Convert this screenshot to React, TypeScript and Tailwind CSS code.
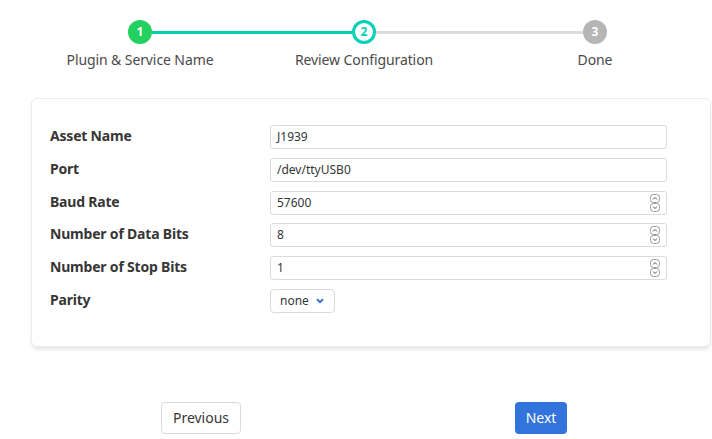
import React from "react";

type Step = { num: number; label: string; state: "done" | "active" | "todo" };

const steps: Step[] = [
  { num: 1, label: "Plugin & Service Name", state: "done" },
  { num: 2, label: "Review Configuration", state: "active" },
  { num: 3, label: "Done", state: "todo" },
];

type Field = { label: string; value: string; kind: "text" | "number" | "select" };

const fields: Field[] = [
  { label: "Asset Name", value: "J1939", kind: "text" },
  { label: "Port", value: "/dev/ttyUSB0", kind: "text" },
  { label: "Baud Rate", value: "57600", kind: "number" },
  { label: "Number of Data Bits", value: "8", kind: "number" },
  { label: "Number of Stop Bits", value: "1", kind: "number" },
  { label: "Parity", value: "none", kind: "select" },
];

function Spinner() {
  return (
    <svg width="10" height="18" viewBox="0 0 10 18" className="shrink-0">
      <rect x="0.5" y="0.5" width="9" height="8" rx="3" fill="none" stroke="#9a9a9a" />
      <path d="M3 5.5 L5 3.5 L7 5.5" fill="none" stroke="#555" strokeWidth="1" />
      <rect x="0.5" y="9.5" width="9" height="8" rx="3" fill="none" stroke="#9a9a9a" />
      <path d="M3 12.5 L5 14.5 L7 12.5" fill="none" stroke="#555" strokeWidth="1" />
    </svg>
  );
}

function StepItem({ step, left, right }: { step: Step; left: string; right: string }) {
  const circle =
    step.state === "done"
      ? "bg-[#23d160] text-white"
      : step.state === "active"
      ? "bg-white border-[3px] border-[#00d1b2] text-[#00d1b2]"
      : "bg-[#b5b5b5] text-white";
  return (
    <div className="flex flex-col items-center">
      <div className="flex items-center w-full h-6">
        <div className={`flex-1 h-[3px] ${left}`} />
        <div className={`w-6 h-6 rounded-full flex items-center justify-center text-[12px] font-bold ${circle}`}>
          {step.num}
        </div>
        <div className={`flex-1 h-[3px] ${right}`} />
      </div>
      <div className="mt-[7px] text-[14px] text-[#4a4a4a] leading-[18px] tracking-[-0.1px]">{step.label}</div>
    </div>
  );
}

export default function App() {
  return (
    <div className="w-[712px] h-[439px] bg-white overflow-hidden" style={{ fontFamily: '"Noto Sans", sans-serif' }}>
      {/* stepper */}
      <div className="grid grid-cols-[224px_224px_238px] pl-[28px] pt-[20px]">
        <StepItem step={steps[0]} left="bg-transparent" right="bg-[#00d1b2]" />
        <StepItem step={steps[1]} left="bg-[#00d1b2]" right="bg-[#dbdbdb]" />
        <StepItem step={steps[2]} left="bg-[#dbdbdb]" right="bg-transparent" />
      </div>

      {/* form card */}
      <div className="ml-[31px] mt-[29px] w-[680px] rounded-md border border-[#ececec] bg-white shadow-[0_3px_4px_-1px_rgba(10,10,10,0.12)] pl-[18px] pr-[43px] pt-[26px] pb-[33px]">
        <div className="flex flex-col gap-[8.8px]">
          {fields.map((f) => (
            <div key={f.label} className="flex items-start">
              <div className="w-[220px] mt-[2px] text-[14px] font-bold text-[#363636] leading-[18px] tracking-[-0.2px]">{f.label}</div>
              {f.kind === "select" ? (
                <div className="h-[24px] w-[65px] rounded-[4px] border border-[#dbdbdb] flex items-center pl-[9px] pr-[10px] text-[12px] text-[#363636]">
                  <span>{f.value}</span>
                  <svg width="8" height="6" viewBox="0 0 8 6" className="ml-auto">
                    <path d="M1 1.2 L4 4.2 L7 1.2" fill="none" stroke="#3273dc" strokeWidth="2" />
                  </svg>
                </div>
              ) : (
                <div className="h-[24px] flex-1 rounded-[3px] border border-[#dbdbdb] flex items-center pl-[6px] pr-[6px] text-[12px] text-[#363636]">
                  <span className="flex-1">{f.value}</span>
                  {f.kind === "number" && <Spinner />}
                </div>
              )}
            </div>
          ))}
        </div>
      </div>

      {/* buttons */}
      <div className="ml-[31px] w-[680px] mt-[55px] grid grid-cols-2">
        <div className="flex justify-center">
          <button className="h-[32px] px-[11px] rounded-[4px] border border-[#dbdbdb] bg-white text-[14px] text-[#363636]">
            Previous
          </button>
        </div>
        <div className="flex justify-center">
          <button className="h-[32px] px-[11px] rounded-[4px] bg-[#3273dc] text-[14px] text-white">Next</button>
        </div>
      </div>
    </div>
  );
}
